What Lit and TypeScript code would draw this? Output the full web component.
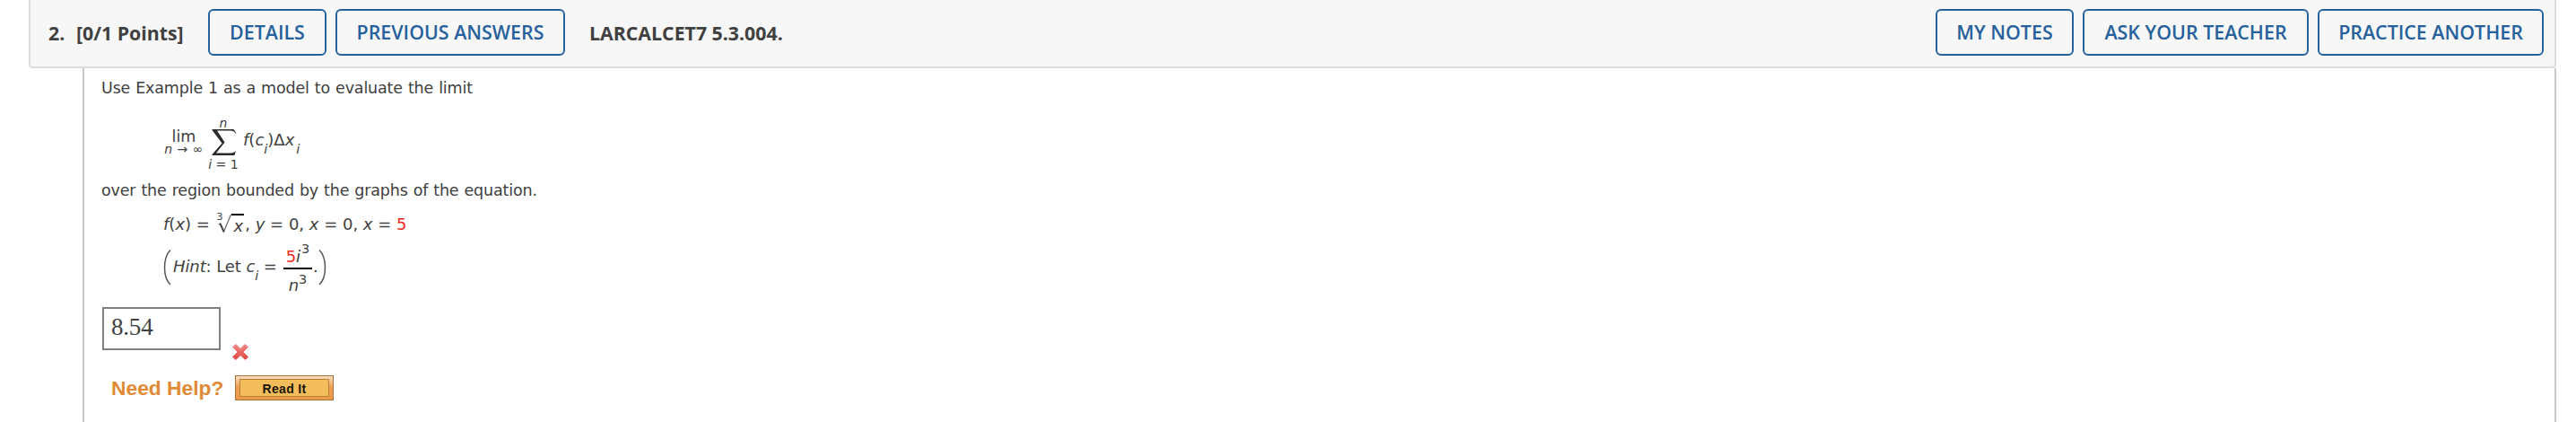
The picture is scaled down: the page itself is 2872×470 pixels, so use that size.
import { LitElement, html, css } from 'lit';
import { customElement, property } from 'lit/decorators.js';

@customElement('question-header')
export class QuestionHeader extends LitElement {
  static override styles = css`
    :host {
      display: flex;
      align-items: flex-start;
      justify-content: space-between;
      box-sizing: border-box;
      height: 76px;
      padding: 10px 12px 0 20px;
      border: 2px solid #ddd;
      border-top: 0;
      border-radius: 0 0 4px 4px;
      background: #f7f7f7;
      font-family: 'Open Sans', sans-serif;
      font-size: 21.3px;
      line-height: 52px;
      white-space: nowrap;
      color: #404040;
    }
    .group {
      display: flex;
      gap: 10px;
      height: 52px;
    }
    .title {
      font-weight: 700;
      line-height: 53px;
    }
    .number {
      width: 21px;
    }
    .points {
      width: 137px;
    }
    .code {
      margin-left: 17px;
    }
    button {
      box-sizing: border-box;
      height: 52px;
      padding: 0 0 1px;
      border: 2px solid #26619c;
      border-radius: 6px;
      background: transparent;
      color: #26619c;
      font: 600 21.4px/47px 'Open Sans', sans-serif;
    }
    .details {
      width: 132px;
    }
    .previous {
      width: 256px;
    }
    .notes {
      width: 154px;
    }
    .ask,
    .practice {
      width: 252px;
    }
  `;

  @property() number = '';
  @property() points = '';
  @property() code = '';

  override render() {
    return html`
      <div class="group">
        <span class="title number">${this.number}</span>
        <span class="title points">${this.points}</span>
        <button class="details">DETAILS</button>
        <button class="previous">PREVIOUS ANSWERS</button>
        <span class="title code">${this.code}</span>
      </div>
      <div class="group">
        <button class="notes">MY NOTES</button>
        <button class="ask">ASK YOUR TEACHER</button>
        <button class="practice">PRACTICE ANOTHER</button>
      </div>
    `;
  }
}

@customElement('limit-formula')
export class LimitFormula extends LitElement {
  static override styles = css`
    :host {
      display: flex;
      height: 90px;
      padding-left: 69px;
      line-height: 20px;
      white-space: pre;
    }
    .lim,
    .sum {
      display: flex;
      flex-direction: column;
      align-items: center;
    }
    .lim {
      width: 46px;
      padding-top: 32px;
      font-size: 17.5px;
    }
    .sum {
      width: 36px;
      margin-left: 3px;
      padding-top: 20px;
    }
    .small {
      font-size: 14px;
      line-height: 14px;
    }
    .lim .small {
      margin-top: -3px;
      letter-spacing: 0.5px;
    }
    .sum svg {
      display: block;
      margin: 0 0 3px 2px;
    }
    .term {
      padding: 36px 0 0 4px;
    }
    sub {
      font-size: 14.5px;
      line-height: 0;
      vertical-align: -9px;
    }
    .last {
      margin-left: 2px;
    }
  `;

  override render() {
    return html`
      <div class="lim">
        <span>lim</span>
        <span class="small"><i>n</i> → ∞</span>
      </div>
      <div class="sum">
        <i class="small">n</i>
        <svg width="28" height="29" viewBox="0 0 28 29">
          <path d="M0.500 0H24.500L27.500 4.500H26.500Q25 1.500 21 1.500H6L14.500 14.500 5 26.500H21Q25.500 26.500 27 23.500L25.500 29H0.500V28L11.500 15.500 0.500 1Z" fill="#2a2a2a" />
        </svg>
        <span class="small"><i>i</i> = 1</span>
      </div>
      <div class="term"><i>f</i>(<i>c</i><sub><i>i</i></sub>)Δ<i>x</i><sub class="last"><i>i</i></sub></div>
    `;
  }
}

@customElement('function-formula')
export class FunctionFormula extends LitElement {
  static override styles = css`
    :host {
      display: flex;
      align-items: flex-start;
      height: 46px;
      padding: 16px 0 0 69px;
      box-sizing: border-box;
      line-height: 20px;
      white-space: pre;
    }
    .root {
      display: flex;
      margin: -5px 2px 0 2px;
    }
    .index {
      width: 7px;
      margin-right: -7px;
      font-size: 11px;
      line-height: 14px;
    }
    .radicand {
      margin: 7px 0 0 2px;
      line-height: 20px;
    }
    svg {
      display: block;
      margin: 2px -14px 0 0;
    }
    .value {
      color: #f5291b;
    }
  `;

  override render() {
    return html`
      <span><i>f</i>(<i>x</i>) = </span>
      <span class="root">
        <span class="index">3</span>
        <svg width="31" height="24" viewBox="0 0 31 24">
          <path d="M1.500 13 3.500 12 7.500 21 15.500 2" fill="none" stroke="#666" stroke-width="1.200" />
          <path d="M3.500 12 7.500 21" stroke="#444" stroke-width="2" />
          <path d="M16 2H30" stroke="#000" stroke-width="2" />
        </svg>
        <i class="radicand">x</i>
      </span>
      <span>, <i>y</i> = 0, <i>x</i> = 0, <i>x</i> = <span class="value">5</span></span>
    `;
  }
}

@customElement('hint-formula')
export class HintFormula extends LitElement {
  static override styles = css`
    :host {
      display: flex;
      align-items: flex-start;
      box-sizing: border-box;
      height: 72px;
      padding: 8px 0 0 69px;
      line-height: 20px;
      white-space: pre;
    }
    svg {
      display: block;
    }
    .text {
      box-sizing: border-box;
      width: 125px;
      padding: 9px 0 0 2px;
      letter-spacing: -0.1px;
    }
    sub,
    sup {
      font-size: 14.5px;
      line-height: 0;
    }
    sub {
      vertical-align: -9px;
    }
    .fraction {
      display: flex;
      flex-direction: column;
      width: 32px;
      margin-top: -2px;
      text-align: center;
    }
    .over {
      height: 22px;
      border-bottom: 2px solid #000;
    }
    .over sup {
      margin-left: 1px;
      vertical-align: 10px;
    }
    .under {
      padding-top: 8px;
    }
    .under sup {
      vertical-align: 8px;
    }
    .value {
      color: #f5291b;
    }
    .stop {
      padding: 9px 0 0 1px;
    }
  `;

  override render() {
    return html`
      <svg width="9" height="40" viewBox="0 0 9 40">
        <path d="M8 0.500Q1.500 7 1.500 20T8 39" fill="none" stroke="#555" stroke-width="1.500" />
      </svg>
      <span class="text"><i>Hint</i>: Let <i>c</i><sub><i>i</i></sub> =</span>
      <div class="fraction">
        <div class="over"><span class="value">5</span><i>i</i><sup>3</sup></div>
        <div class="under"><i>n</i><sup>3</sup></div>
      </div>
      <span class="stop">.</span>
      <svg width="9" height="40" viewBox="0 0 9 40">
        <path d="M1 0.500Q7.500 7 7.500 20T1 39" fill="none" stroke="#555" stroke-width="1.500" />
      </svg>
    `;
  }
}

@customElement('app-root')
export class AppRoot extends LitElement {
  static override styles = css`
    :host {
      display: block;
      box-sizing: border-box;
      height: 470px;
      padding: 0 22px 0 32px;
      overflow: hidden;
      background: #fff;
      color: #404040;
      font-family: 'DejaVu Sans', Verdana, sans-serif;
      font-size: 18px;
    }
    .body {
      box-sizing: border-box;
      height: 394px;
      margin-left: 60px;
      padding: 10px 0 0 19px;
      border: solid #c8c8c8;
      border-width: 0 2px;
    }
    p {
      margin: 0;
      font-size: 17.5px;
      line-height: 24px;
      letter-spacing: -0.16px;
      word-spacing: 0.6px;
    }
    .answer {
      display: flex;
      gap: 12px;
      height: 76px;
      margin-left: 1px;
    }
    .box {
      box-sizing: border-box;
      width: 132px;
      height: 48px;
      padding-left: 8px;
      border: 2px solid #808080;
      font: 27px/41px 'Liberation Serif', serif;
      letter-spacing: -0.2px;
    }
    .wrong {
      margin-top: 40px;
    }
    .help {
      display: flex;
      align-items: flex-start;
      padding-left: 11px;
    }
    .label {
      width: 138px;
      color: #e18a35;
      font: bold 22.8px/28px 'Liberation Sans', sans-serif;
    }
    .read {
      box-sizing: border-box;
      width: 110px;
      height: 28px;
      padding: 3px 4px;
      border: 1px solid #a8713c;
      background: linear-gradient(#fbe0c4, #f0a050 45%, #ec9a48);
    }
    .read span {
      display: block;
      height: 18px;
      border: 1px solid #b98038;
      background: #f4bd5c;
      color: #1c1608;
      text-align: center;
      font: bold 14px/20px 'Liberation Sans', sans-serif;
      letter-spacing: 0.3px;
    }
  `;

  override render() {
    return html`
      <question-header number="2." points="[0/1 Points]" code="LARCALCET7 5.3.004."></question-header>
      <div class="body">
        <p>Use Example 1 as a model to evaluate the limit</p>
        <limit-formula></limit-formula>
        <p>over the region bounded by the graphs of the equation.</p>
        <function-formula></function-formula>
        <hint-formula></hint-formula>
        <div class="answer">
          <div class="box">8.54</div>
          <svg class="wrong" width="20" height="20" viewBox="0 0 20 20">
            <defs>
              <linearGradient id="red" x2="0" y2="1">
                <stop stop-color="#f28a8a" />
                <stop offset="1" stop-color="#e04545" />
              </linearGradient>
            </defs>
            <path d="M5 1.500 10 6.500 15 1.500 18.500 4.500 13 10 18.500 15.500 15.500 18.500 10 13.500 5 18.500 1.500 15.500 7 10 1.500 4.500Z" fill="url(#red)" stroke="url(#red)" stroke-linejoin="round" />
          </svg>
        </div>
        <div class="help">
          <span class="label">Need Help?</span>
          <div class="read"><span>Read It</span></div>
        </div>
      </div>
    `;
  }
}
